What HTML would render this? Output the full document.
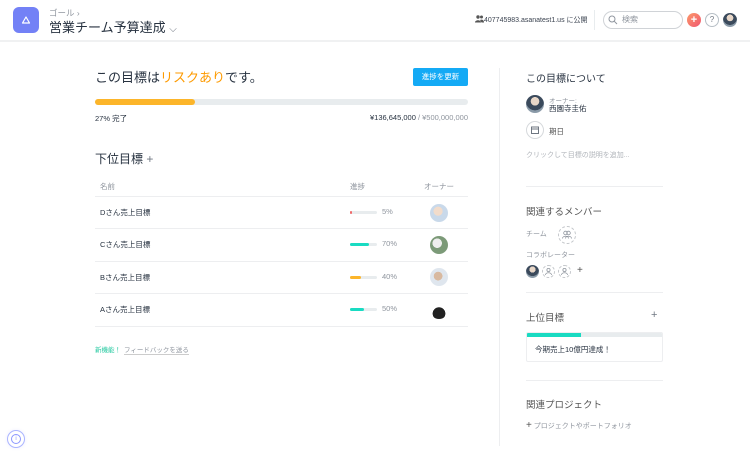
<!DOCTYPE html>
<html><head><meta charset="utf-8"><style>
*{box-sizing:border-box;margin:0;padding:0}
body{width:750px;height:457px;background:#fff;font-family:"Liberation Sans","Noto Sans CJK JP",sans-serif;color:#273240;position:relative;overflow:hidden}
.a{position:absolute;white-space:nowrap}
.g{color:#8f959e}
.bar{position:absolute;height:4px;border-radius:2px;background:#e8ecee}
.bar i{position:absolute;left:0;top:0;bottom:0;border-radius:2px}
.av{position:absolute;border-radius:50%;background:radial-gradient(circle at 50% 35%,#e8d7c8 0 28%,#3b4a5c 30% 60%,#8a9aa8 62%)}
.hl{position:absolute;height:1px;background:#edeef0}
.dc{position:absolute;border:1px dashed #c4c7cb;border-radius:50%}
</style></head><body>
<div class="hl" style="left:0;top:40px;width:750px;background:#f0f1f2;height:2px"></div>
<div class="a" style="left:13px;top:7px;width:26px;height:26px;border-radius:6px;background:#7381f6"></div>
<svg class="a" style="left:21px;top:15px" width="10" height="10" viewBox="0 0 10 10"><path d="M5 2 L8.5 8 H1.5 Z" fill="none" stroke="#fff" stroke-width="1.2" stroke-linejoin="round"/></svg>
<div class="a g" style="left:49px;top:7px;font-size:8.5px">ゴール ›</div>
<div class="a" style="left:49px;top:17px;font-size:13px;color:#273240">営業チーム予算達成 <span style="font-size:10px;color:#6f7782">⌵</span></div>
<svg class="a" style="left:475px;top:15px" width="9" height="8"><circle cx="3" cy="2" r="1.7" fill="#555"/><circle cx="6.5" cy="2" r="1.5" fill="#555"/><path d="M0 7.5c0-3 6-3 6 0zM5 5c2-1 4 0 4 2.5H6.5z" fill="#555"/></svg>
<div class="a" style="left:484px;top:15px;font-size:7px;color:#3b4350">407745983.asanatest1.us に公開</div>
<div class="a" style="left:594px;top:10px;width:1px;height:20px;background:#e8ecee"></div>
<div class="a" style="left:603px;top:11px;width:80px;height:18px;border:1px solid #d0d3d7;border-radius:9px"></div>
<svg class="a" style="left:608px;top:15px" width="10" height="10"><circle cx="4" cy="4" r="3" fill="none" stroke="#8f959e"/><path d="M6.2 6.2 9 9" stroke="#8f959e"/></svg>
<div class="a g" style="left:622px;top:14px;font-size:8px">検索</div>
<div class="a" style="left:687px;top:13px;width:14px;height:14px;border-radius:50%;background:linear-gradient(135deg,#fc9a6b,#f0566f);color:#fff;font-size:11px;line-height:14px;text-align:center;font-weight:bold">+</div>
<div class="a" style="left:705px;top:13px;width:14px;height:14px;border-radius:50%;border:1px solid #b7bfc6;color:#6f7782;font-size:8px;line-height:12px;text-align:center">?</div>
<div class="av" style="left:723px;top:13px;width:14px;height:14px"></div>

<div class="a" style="left:95px;top:67px;font-size:13px">この目標は<span style="color:#fd9a00">リスクあり</span>です。</div>
<div class="a" style="left:413px;top:68px;width:55px;height:18px;background:#14aaf5;border-radius:2px;color:#fff;font-size:7.5px;line-height:18px;text-align:center">進捗を更新</div>
<div class="bar" style="left:95px;top:99px;width:373px;height:6px;border-radius:3px"><i style="width:100px;background:#fcb52a;border-radius:3px"></i></div>
<div class="a" style="left:95px;top:113px;font-size:7.5px">27% 完了</div>
<div class="a" style="right:282px;top:113px;font-size:7.5px">¥136,645,000 <span class="g">/ ¥500,000,000</span></div>

<div class="a" style="left:95px;top:150px;font-size:12px">下位目標 <span style="color:#6f7782">+</span></div>
<div class="a g" style="left:100px;top:181px;font-size:7.5px">名前</div>
<div class="a g" style="left:350px;top:181px;font-size:7.5px">進捗</div>
<div class="a g" style="left:424px;top:181px;font-size:7.5px">オーナー</div>
<div class="hl" style="left:95px;top:196px;width:373px"></div>

<div class="a" style="left:100px;top:207px;font-size:7.5px">Dさん売上目標</div>
<div class="bar" style="left:350px;top:211px;width:27px;height:3px"><i style="width:2px;background:#f06a6a"></i></div>
<div class="a g" style="left:382px;top:207px;font-size:7.5px">5%</div>
<div class="av" style="left:430px;top:204px;width:18px;height:18px;background:radial-gradient(circle at 45% 40%,#f2dccb 0 30%,#c9d9ea 32%)"></div>
<div class="hl" style="left:95px;top:228px;width:373px"></div>

<div class="a" style="left:100px;top:239px;font-size:7.5px">Cさん売上目標</div>
<div class="bar" style="left:350px;top:243px;width:27px;height:3px"><i style="width:19px;background:#19dbc2"></i></div>
<div class="a g" style="left:382px;top:239px;font-size:7.5px">70%</div>
<div class="av" style="left:430px;top:236px;width:18px;height:18px;background:radial-gradient(circle at 40% 40%,#eee 0 30%,#7c9a78 32%)"></div>
<div class="hl" style="left:95px;top:261px;width:373px"></div>

<div class="a" style="left:100px;top:272px;font-size:7.5px">Bさん売上目標</div>
<div class="bar" style="left:350px;top:276px;width:27px;height:3px"><i style="width:11px;background:#fcb52a"></i></div>
<div class="a g" style="left:382px;top:272px;font-size:7.5px">40%</div>
<div class="av" style="left:430px;top:268px;width:18px;height:18px;background:radial-gradient(circle at 45% 45%,#d8b9a0 0 30%,#dfe6ee 32%)"></div>
<div class="hl" style="left:95px;top:293px;width:373px"></div>

<div class="a" style="left:100px;top:304px;font-size:7.5px">Aさん売上目標</div>
<div class="bar" style="left:350px;top:308px;width:27px;height:3px"><i style="width:14px;background:#19dbc2"></i></div>
<div class="a g" style="left:382px;top:304px;font-size:7.5px">50%</div>
<div class="av" style="left:430px;top:301px;width:18px;height:18px;background:radial-gradient(circle at 50% 70%,#222 0 40%,#fff 42%)"></div>
<div class="hl" style="left:95px;top:326px;width:373px"></div>

<div class="a" style="left:95px;top:344px;font-size:6.5px;color:#25c9a0">新機能！</div>
<div class="a g" style="left:124px;top:344px;font-size:6.5px;border-bottom:1px solid #ccc">フィードバックを送る</div>

<div class="a" style="left:499px;top:68px;width:1px;height:378px;background:#edeef0"></div>

<div class="a" style="left:526px;top:70px;font-size:10px">この目標について</div>
<div class="av" style="left:526px;top:95px;width:18px;height:18px"></div>
<div class="a g" style="left:549px;top:95px;font-size:6.5px">オーナー:</div>
<div class="a" style="left:549px;top:103px;font-size:7.5px">西園寺圭佑</div>
<div class="dc" style="left:526px;top:121px;width:18px;height:18px;border-style:solid;border-color:#d6d9dc"></div>
<svg class="a" style="left:531px;top:126px" width="8" height="8"><rect x=".5" y="1" width="7" height="6.5" fill="none" stroke="#6f7782"/><path d="M.5 3h7" stroke="#6f7782"/></svg>
<div class="a" style="left:549px;top:126px;font-size:7.5px;color:#555">期日</div>
<div class="a" style="left:526px;top:150px;font-size:7px;color:#b0b4ba">クリックして目標の説明を追加...</div>
<div class="hl" style="left:526px;top:186px;width:137px"></div>

<div class="a" style="left:526px;top:204px;font-size:9.5px;color:#555">関連するメンバー</div>
<div class="a g" style="left:526px;top:229px;font-size:7px">チーム</div>
<div class="dc" style="left:558px;top:226px;width:18px;height:18px"></div>
<svg class="a" style="left:561px;top:229px" width="12" height="12"><circle cx="4.5" cy="4" r="1.8" fill="none" stroke="#8f959e" stroke-width=".8"/><circle cx="7.5" cy="4" r="1.8" fill="none" stroke="#8f959e" stroke-width=".8"/><path d="M1.5 9.5c0-3 6-3 6 0M4.5 9.5c0-3 6-3 6 0" fill="none" stroke="#8f959e" stroke-width=".8"/></svg>
<div class="a g" style="left:526px;top:250px;font-size:7px">コラボレーター</div>
<div class="av" style="left:526px;top:265px;width:13px;height:13px"></div>
<div class="dc" style="left:542px;top:265px;width:13px;height:13px"></div>
<div class="dc" style="left:558px;top:265px;width:13px;height:13px"></div>
<svg class="a" style="left:544px;top:267px" width="9" height="9"><circle cx="4.5" cy="3" r="1.6" fill="none" stroke="#8f959e" stroke-width=".8"/><path d="M1.5 8c0-3 6-3 6 0" fill="none" stroke="#8f959e" stroke-width=".8"/></svg>
<svg class="a" style="left:560px;top:267px" width="9" height="9"><circle cx="4.5" cy="3" r="1.6" fill="none" stroke="#8f959e" stroke-width=".8"/><path d="M1.5 8c0-3 6-3 6 0" fill="none" stroke="#8f959e" stroke-width=".8"/></svg>
<div class="a" style="left:577px;top:265px;font-size:10px;color:#555">+</div>
<div class="hl" style="left:526px;top:292px;width:137px"></div>

<div class="a" style="left:526px;top:310px;font-size:9.5px;color:#555">上位目標</div>
<div class="a" style="left:651px;top:309px;font-size:11px;color:#6f7782">+</div>
<div class="a" style="left:526px;top:332px;width:137px;height:30px;border:1px solid #edeef0;border-radius:2px;overflow:hidden"><div style="height:4px;background:#e8ecee"><div style="width:54px;height:4px;background:#19dbc2"></div></div></div>
<div class="a" style="left:535px;top:344px;font-size:7.5px">今期売上10億円達成！</div>
<div class="hl" style="left:526px;top:380px;width:137px"></div>

<div class="a" style="left:526px;top:397px;font-size:9.5px;color:#555">関連プロジェクト</div>
<div class="a g" style="left:526px;top:420px;font-size:7px"><span style="font-size:10px;color:#555">+</span> プロジェクトやポートフォリオ</div>

<div class="a" style="left:7px;top:430px;width:18px;height:18px;border-radius:50%;border:1px solid #aab4ff;box-shadow:0 0 4px #eef"></div>
<div class="a" style="left:11px;top:434px;width:10px;height:10px;border-radius:50%;border:1px solid #8a96ff;color:#8a96ff;font-size:6px;line-height:8px;text-align:center">i</div>
</body></html>
